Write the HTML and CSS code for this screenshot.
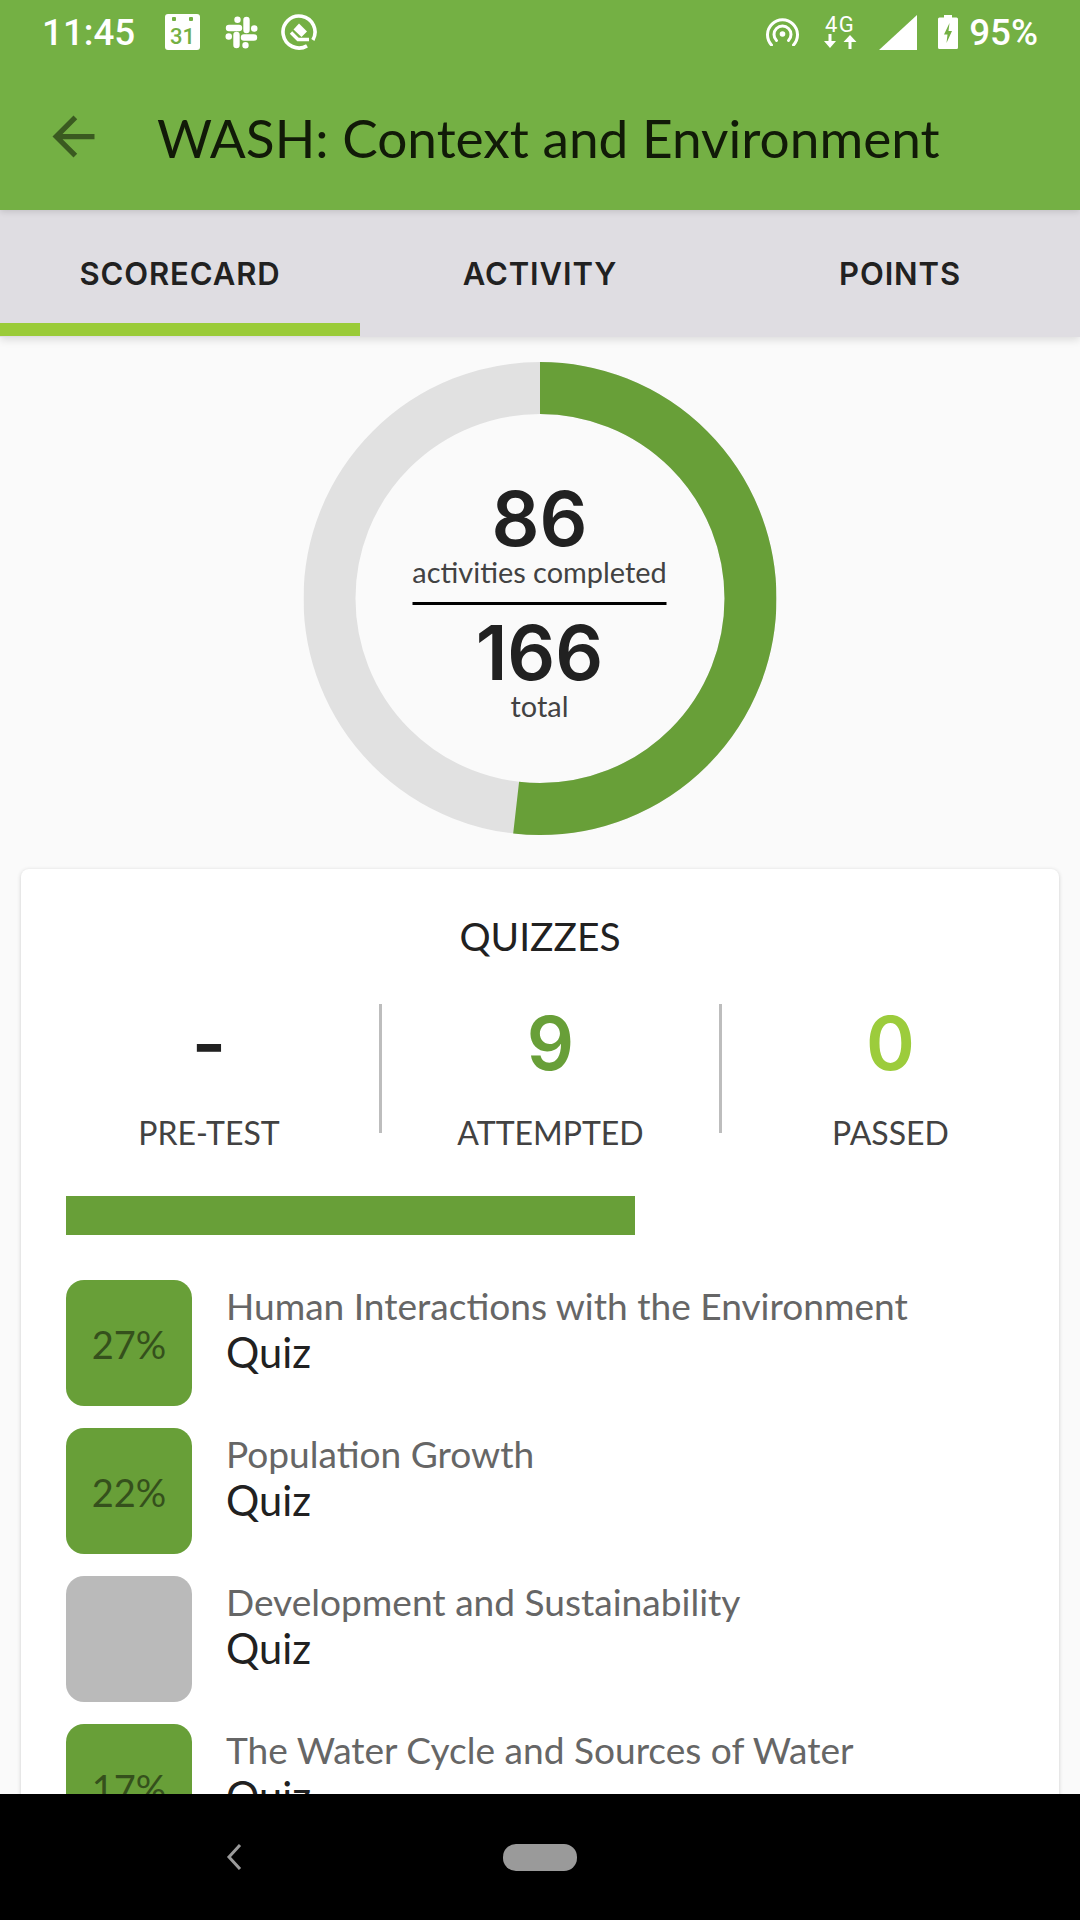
FILE: index.html
```html
<!DOCTYPE html>
<html lang="en">
<head>
  <meta charset="UTF-8" />
  <meta name="viewport" content="width=device-width, initial-scale=1.0" />
  <title>WASH: Context and Environment</title>
  <link rel="stylesheet" href="styles.css">
</head>
<body>
  <div class="screen">
    <header class="appbar">
      <div class="statusbar">
        <span class="time">11:45</span>
        <div class="calendar-icon"><span>31</span></div>
        <svg class="slack-icon" viewBox="0 0 33 33" fill="none" stroke="#fff" stroke-width="6.4" stroke-linecap="round">
          <path d="M4 12H14M12.5 3.6V3.7M21.5 4V14M29.3 12.5H29.2M19 21.5H29M20.5 29.3V29.2M11.5 19V29M3.7 20.5H3.8"/>
        </svg>
        <svg class="q-icon" viewBox="0 0 36 36">
          <path d="M26 31.86A16 16 0 1 1 31.86 26" fill="none" stroke="#fff" stroke-width="3.6"/>
          <path d="M12.5 15.5L18 9.5L26 17.5L20.5 23Z" fill="#fff"/>
          <path d="M10 18.5L17 25.5H28" fill="none" stroke="#fff" stroke-width="3.4"/>
        </svg>
        <div class="status-right">
          <svg class="hotspot-icon" viewBox="0 0 33 28" fill="none" stroke="#fff" stroke-width="3" stroke-linecap="round">
            <path d="M5.5 27A15 15 0 1 1 27.5 27"/>
            <path d="M10.5 22.5A8.5 8.5 0 1 1 22.5 22.5"/>
            <circle cx="16.5" cy="16" r="2.8" fill="#fff" stroke="none"/>
          </svg>
          <div class="network">
            <span>4G</span>
            <svg viewBox="0 0 34 15" fill="#fff">
              <path d="M5.5 0H8.5V7H13L7 14L1 7H5.5Z"/>
              <path d="M25.5 15H28.5V8H33.5L27 1L20.5 8H25.5Z"/>
            </svg>
          </div>
          <svg class="signal-icon" viewBox="0 0 38 35"><path d="M38 0V35H0Z" fill="#fff"/></svg>
          <svg class="battery-icon" viewBox="0 0 20 34">
            <path d="M6 0H14V2.5H18.5Q20 2.5 20 4V32.5Q20 34 18.5 34H1.5Q0 34 0 32.5V4Q0 2.5 1.5 2.5H6Z" fill="#fff"/>
            <path d="M11.5 8L6 19.5H9.5L8.5 28L14 16H10.5Z" fill="#74b044"/>
          </svg>
          <span class="battery-level">95%</span>
        </div>
      </div>
      <div class="toolbar">
        <svg class="back-icon" viewBox="0 0 24 24"><path d="M20 11H7.83l5.59-5.59L12 4l-8 8 8 8 1.41-1.41L7.83 13H20v-2z"/></svg>
        <h1>WASH: Context and Environment</h1>
      </div>
    </header>

    <nav class="tabs">
      <a class="tab active">SCORECARD</a>
      <a class="tab">ACTIVITY</a>
      <a class="tab">POINTS</a>
    </nav>

    <main class="content">
      <div class="donut">
        <svg viewBox="0 0 473 473" fill="none" stroke-width="52">
          <circle cx="236.5" cy="236.5" r="210.5" stroke="#e1e1e1"/>
          <circle class="donut-value" cx="236.5" cy="236.5" r="210.5" stroke="#689f38" stroke-dasharray="685 1322.6"/>
        </svg>
        <div class="donut-label">
          <div class="donut-num">86</div>
          <div class="donut-text">activities completed</div>
          <div class="donut-rule"></div>
          <div class="donut-num">166</div>
          <div class="donut-text">total</div>
        </div>
      </div>

      <section class="card">
        <h2>QUIZZES</h2>
        <div class="stats">
          <div class="stat">
            <div class="stat-num">-</div>
            <div class="stat-label">PRE-TEST</div>
          </div>
          <div class="stat-divider"></div>
          <div class="stat">
            <div class="stat-num attempted">9</div>
            <div class="stat-label">ATTEMPTED</div>
          </div>
          <div class="stat-divider"></div>
          <div class="stat">
            <div class="stat-num passed">0</div>
            <div class="stat-label">PASSED</div>
          </div>
        </div>
        <div class="progress"><div class="progress-fill" style="width: 569px"></div></div>
        <ul class="quiz-list">
          <li class="quiz">
            <div class="badge">27%</div>
            <div class="quiz-info"><div class="quiz-title">Human Interactions with the Environment</div><div class="quiz-type">Quiz</div></div>
          </li>
          <li class="quiz">
            <div class="badge">22%</div>
            <div class="quiz-info"><div class="quiz-title">Population Growth</div><div class="quiz-type">Quiz</div></div>
          </li>
          <li class="quiz">
            <div class="badge empty"></div>
            <div class="quiz-info"><div class="quiz-title">Development and Sustainability</div><div class="quiz-type">Quiz</div></div>
          </li>
          <li class="quiz">
            <div class="badge">17%</div>
            <div class="quiz-info"><div class="quiz-title">The Water Cycle and Sources of Water</div><div class="quiz-type">Quiz</div></div>
          </li>
        </ul>
      </section>
    </main>

    <footer class="navbar">
      <svg class="nav-back" viewBox="0 0 16 26" fill="none" stroke="#9a9a9a" stroke-width="3"><path d="M14 1L3 13L14 25"/></svg>
      <div class="nav-home"></div>
    </footer>
  </div>
</body>
</html>
```

FILE: styles.css
```css
* { box-sizing: border-box; }
body { margin: 0; background: #000; font-family: Lato, Arial, sans-serif; }
.screen { width: 1080px; height: 1920px; display: flex; flex-direction: column; overflow: hidden; background: #fafafa; }

.appbar { height: 210px; background: #74b044; flex-shrink: 0; position: relative; z-index: 1; box-shadow: 0 2px 6px rgba(0, 0, 0, 0.12); }
.statusbar { height: 63px; padding: 1px 42px 0 42px; display: flex; align-items: center; color: #fff; font-family: Roboto, sans-serif; }
.time { font-size: 36.75px; font-weight: 500; width: 123px; }
.calendar-icon { width: 35px; height: 36px; border-radius: 3px; color: #74b044; display: flex; align-items: flex-end; justify-content: center; font-size: 22px; font-weight: 500; line-height: 26px; background: radial-gradient(circle at 9px 5px, #74b044 2px, transparent 2.5px), radial-gradient(circle at 26px 5px, #74b044 2px, transparent 2.5px), #fff; }
.slack-icon { width: 33px; height: 33px; margin-left: 25px; }
.q-icon { width: 36px; height: 36px; margin-left: 23px; }
.status-right { margin-left: auto; display: flex; align-items: center; }
.hotspot-icon { width: 33px; height: 28px; margin-right: 1px; }
.network { width: 34px; margin-left: 23px; display: flex; flex-direction: column; align-items: center; }
.network span { font-size: 22px; line-height: 18px; letter-spacing: 1.5px; }
.network svg { width: 34px; height: 15px; display: block; }
.signal-icon { width: 38px; height: 35px; margin-left: 22px; }
.battery-icon { width: 20px; height: 34px; margin-left: 21px; }
.battery-level { font-size: 36.75px; font-weight: 500; margin-left: 11px; }

.toolbar { height: 147px; display: flex; align-items: center; padding-left: 42px; }
.back-icon { width: 63px; height: 63px; fill: #3a5a20; }
.toolbar h1 { margin: 0 0 0 52px; font-size: 53.2px; font-weight: 400; color: #111a08; }

.tabs { height: 127px; flex-shrink: 0; display: flex; background: #dfdde2; box-shadow: 0 3px 8px rgba(0, 0, 0, 0.12); position: relative; }
.tab { flex: 1; position: relative; display: flex; align-items: center; justify-content: center; padding-bottom: 1px; font-family: Inter, sans-serif; font-size: 31px; font-weight: 600; letter-spacing: 0.9px; color: #212121; }
.tab.active::after { content: ""; position: absolute; left: 0; right: 0; bottom: 1px; height: 13px; background: #9acb38; }

.content { flex: 1; min-height: 0; overflow: hidden; padding-top: 25px; }
.donut { width: 473px; height: 473px; margin: 0 auto 34px; display: grid; transform: translateX(-0.5px); }
.donut > * { grid-area: 1 / 1; }
.donut svg { width: 473px; height: 473px; }
.donut-value { transform: rotate(-90deg); transform-origin: center; }
.donut-label { display: flex; flex-direction: column; align-items: center; padding-top: 118px; }
.donut-num { font-family: Inter, sans-serif; font-size: 75px; font-weight: 600; line-height: 78px; color: #212121; }
.donut-text { font-size: 28.9px; line-height: 28px; color: #424242; }
.donut-rule { width: 254px; height: 3px; background: #000; margin: 16px 0 9px; }

.card { margin: 0 21px; background: #fff; border-radius: 8px; box-shadow: 0 1px 4px rgba(0, 0, 0, 0.18); padding: 0 45px; height: 1000px; }
.card h2 { margin: 0; padding-top: 44px; font-size: 38.9px; line-height: 46px; font-weight: 400; text-align: center; color: #212121; }
.stats { margin: 45px -45px 0; padding-left: 18px; display: grid; grid-template-columns: 340px 3px 337px 3px 1fr; align-items: start; }
.stat { text-align: center; }
.stat-num { font-family: Inter, sans-serif; font-size: 74px; font-weight: 600; line-height: 88px; margin-top: -5px; color: #212121; }
.stat-num.attempted { color: #689f38; }
.stat-num.passed { color: #9ccc3c; }
.stat-label { font-size: 32px; line-height: 40px; color: #424242; margin-top: 26px; }
.stat-divider { height: 129px; background: #bdbdbd; }

.progress { margin-top: 43px; height: 39px; }
.progress-fill { height: 100%; background: #689f38; }

.quiz-list { list-style: none; margin: 45px 0 0; padding: 0; }
.quiz { display: flex; margin-bottom: 22px; }
.badge { width: 126px; height: 126px; flex-shrink: 0; border-radius: 18px; padding-top: 2px; background: #689f38; color: #35501c; font-size: 38px; display: flex; align-items: center; justify-content: center; }
.badge.empty { background: #bababa; }
.quiz-info { margin-left: 34px; padding-top: 3px; }
.quiz-title { font-size: 37.1px; line-height: 46px; color: #666; }
.quiz-type { font-size: 41.6px; line-height: 46px; color: #212121; }

.navbar { height: 126px; flex-shrink: 0; background: #000; position: relative; display: flex; align-items: center; justify-content: center; }
.nav-back { width: 16px; height: 26px; position: absolute; left: 226px; top: 50px; }
.nav-home { width: 74px; height: 27px; border-radius: 13px; background: #9a9a9a; }
```
